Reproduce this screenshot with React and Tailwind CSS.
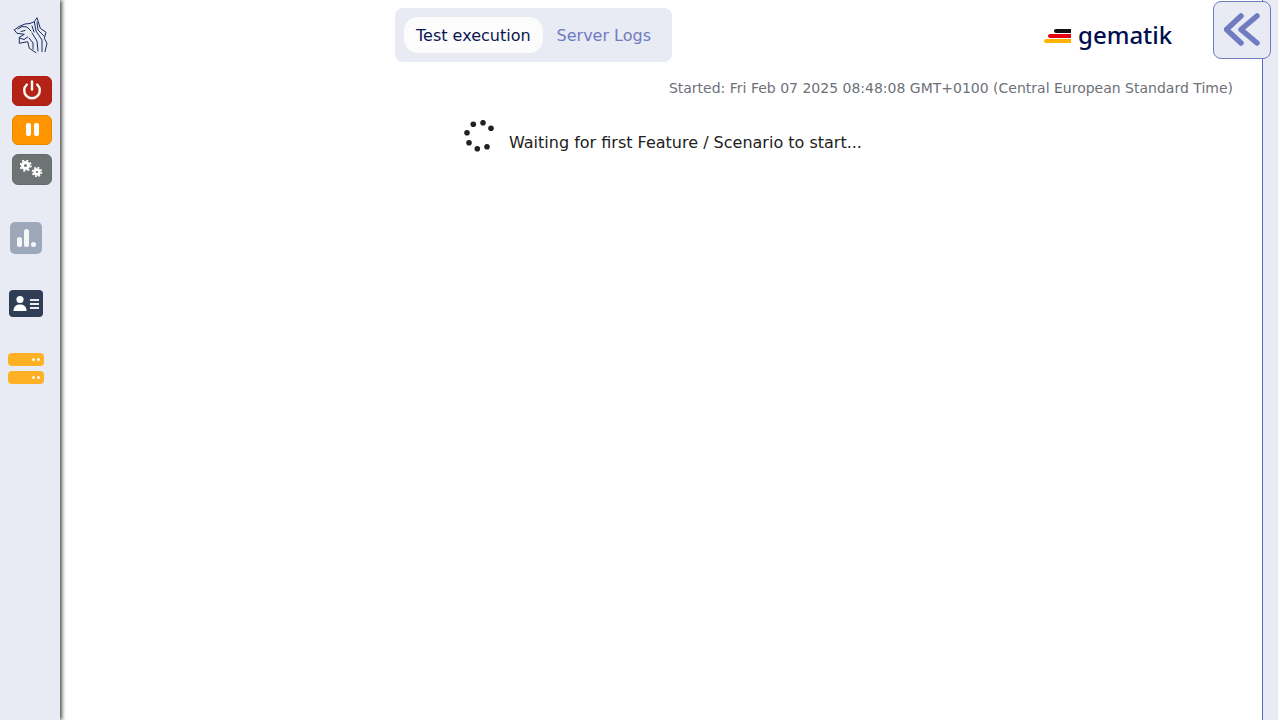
const font = { fontFamily: '"DejaVu Sans", sans-serif' };

function Lion() {
  return (
    <svg width="36" height="38" viewBox="0 0 36 38" fill="none" stroke="#1c2f63" strokeWidth="1" strokeLinejoin="round" strokeLinecap="round">
      <path d="M1.3 14 L6 10.5 L12 8 L17 7.5 L21.3 5.7 L24 1.7 L27.3 12.3 L33 16.3 L31.3 22.3 L34 27.3 L32 35.7" />
      <path d="M1.3 14 L4 17.3 L11.3 18.3 L6.3 21.3 L6.3 27.3 L14.7 25.7 L16.3 32.3 L23 36.7" />
      <path d="M5 13 L9 10.5 L14 11 L18 15 M8 15.5 L12 14.5 M6.5 22 L11 23.5 L14.7 21" />
      <path d="M21.3 5.7 L23 15 L29 24 L29 35.5 M19 17 L24 25 L25 35 M16 22 L20 27 L20 33" />
      <path d="M24 6 L25 14 L31 20 M19 10 L21 16" />
    </svg>
  );
}

function Spinner() {
  const dots = [
    [20, 2.7], [28, 8.3], [24, 26.7], [14.3, 28.7], [6, 22.7], [4, 12.7], [10.3, 4.3],
  ];
  return (
    <svg width="32" height="32" viewBox="0 0 32 32">
      {dots.map(([x, y]) => (
        <circle key={x} cx={x} cy={y} r="2.8" fill="#212121" />
      ))}
    </svg>
  );
}

function Gears() {
  return (
    <svg width="24" height="20" viewBox="0 0 24 20" fill="none">
      <circle cx="5.5" cy="5.5" r="3" stroke="white" strokeWidth="3" />
      <circle cx="5.5" cy="5.5" r="5.2" stroke="white" strokeWidth="2" strokeDasharray="2 2.1" />
      <circle cx="17" cy="12" r="2.4" stroke="white" strokeWidth="2.6" />
      <circle cx="17" cy="12" r="4.4" stroke="white" strokeWidth="1.8" strokeDasharray="1.8 1.65" />
    </svg>
  );
}

function ServerBar() {
  return (
    <div className="w-9 h-[13px] rounded-[4px] bg-[#ffb024] flex items-center justify-end gap-[2px] pr-[4px]">
      <span className="w-[3px] h-[3px] rounded-full bg-white/90" />
      <span className="w-[3px] h-[3px] rounded-full bg-white/90" />
    </div>
  );
}

function Sidebar() {
  return (
    <div className="w-[60px] shrink-0 h-full bg-[#e8eaf4] shadow-[2px_0_4px_rgba(0,0,0,0.7)] flex flex-col items-center z-10">
      <div className="mt-[16px] h-[38px] ml-[1px]"><Lion /></div>
      <div className="mt-[22px] flex flex-col gap-[9px] ml-[4px]">
        <button className="w-10 h-[30px] rounded-[6px] bg-[#b52317] border border-[#a81f14] flex items-center justify-center">
          <svg width="20" height="20" viewBox="0 0 20 20" fill="none" stroke="white" strokeWidth="2.4" strokeLinecap="round" className="-mt-[3px]">
            <path d="M10 1.5 V9.5" />
            <path d="M4.8 4.6 A7.8 7.8 0 1 0 15.2 4.6" />
          </svg>
        </button>
        <button className="w-10 h-[30px] rounded-[6px] bg-[#ff9500] border border-[#e88700] flex items-center justify-center gap-[3px]">
          <span className="w-[5px] h-[13px] -mt-[2px] rounded-[2px] bg-white" />
          <span className="w-[5px] h-[13px] -mt-[2px] rounded-[2px] bg-white" />
        </button>
        <button className="w-10 h-[31px] rounded-[6px] bg-[#6c7574] border border-[#646c6b] flex items-center justify-center">
          <Gears />
        </button>
      </div>
      <div className="mt-[37px] -ml-[8px] w-8 h-8 rounded-[5px] bg-[#9ea8bb] flex items-end justify-center gap-[2px] pb-[7px]">
        <span className="w-[5px] h-[10px] rounded-full bg-white/90" />
        <span className="w-[5px] h-[18px] rounded-full bg-white/90" />
        <span className="w-[5px] h-[5px] rounded-full bg-white/90" />
      </div>
      <div className="mt-[36px] -ml-[8px] w-[34px] h-[27px] rounded-[4px] bg-[#2f3d55] flex items-center justify-center gap-[3px]">
        <svg width="14" height="17" viewBox="0 0 14 17" fill="white">
          <circle cx="7" cy="4.5" r="3.6" />
          <path d="M0.5 16 C0.5 11 3.5 9.5 7 9.5 C10.5 9.5 13.5 11 13.5 16 Z" />
        </svg>
        <div className="flex flex-col gap-[2px]">
          <span className="block w-[9px] h-[2px] bg-white/90" />
          <span className="block w-[9px] h-[2px] bg-white/90" />
          <span className="block w-[9px] h-[2px] bg-white/90" />
        </div>
      </div>
      <div className="mt-[36px] flex flex-col gap-[5px] -ml-[8px]">
        <ServerBar />
        <ServerBar />
      </div>
    </div>
  );
}

export default function App() {
  return (
    <div className="w-[1280px] h-[720px] overflow-hidden flex bg-white text-[#212121]" style={font}>
      <Sidebar />
      <div className="flex-1 relative">
        <div className="h-[70px] flex items-start">
          <div className="ml-[335px] mt-[8px] h-[54px] w-[277px] rounded-[8px] bg-[#e8eaf4] flex items-center pl-[9px] text-[16px]">
            <div className="h-9 px-3 pt-[2px] rounded-[14px] bg-[#fcfcfd] text-[#0a1551] flex items-center">Test execution</div>
            <div className="h-9 px-[14px] pt-[2px] text-[#6f7cc0] flex items-center">Server Logs</div>
          </div>
          <div className="ml-[372px] mt-[20px] flex items-center gap-[7px]">
            <div className="flex flex-col w-[27px] gap-[1px] mt-[1px]">
              <span className="h-[4px] ml-[10px] rounded-l-full bg-[#111]" />
              <span className="h-[4px] ml-[4px] rounded-l-full bg-[#e3000f]" />
              <span className="h-[4px] rounded-l-full bg-[#ffb400]" />
            </div>
            <span className="text-[24px] leading-[30px] text-[#000e50] font-medium" style={{ fontFamily: '"Noto Sans", sans-serif' }}>gematik</span>
          </div>
        </div>
        <p className="text-right text-[14px] leading-5 text-[#6e7178] mr-[47px] mt-[8px]">Started: Fri Feb 07 2025 08:48:08 GMT+0100 (Central European Standard Time)</p>
        <div className="mt-[22px] ml-[403px] flex items-start">
          <Spinner />
          <span className="ml-[14px] mt-[11px] text-[16px] leading-6">Waiting for first Feature / Scenario to start...</span>
        </div>
        <div className="absolute top-0 bottom-0 right-[2px] w-4 bg-[#e8eaf4] border-l border-[#5c6bc0]" />
        <button className="absolute top-[1px] right-[9px] w-[58px] h-[58px] rounded-[8px] bg-[#e8eaf4] border border-[#6f7cc0] flex items-center justify-center">
          <svg width="36" height="34" viewBox="0 0 36 34" fill="none" stroke="#6f7cc0" strokeWidth="5.5" strokeLinecap="round" strokeLinejoin="round">
            <path d="M17 3 L2.5 16.5 L17 30" />
            <path d="M33 3 L17 16.5 L33 30" />
          </svg>
        </button>
      </div>
    </div>
  );
}
